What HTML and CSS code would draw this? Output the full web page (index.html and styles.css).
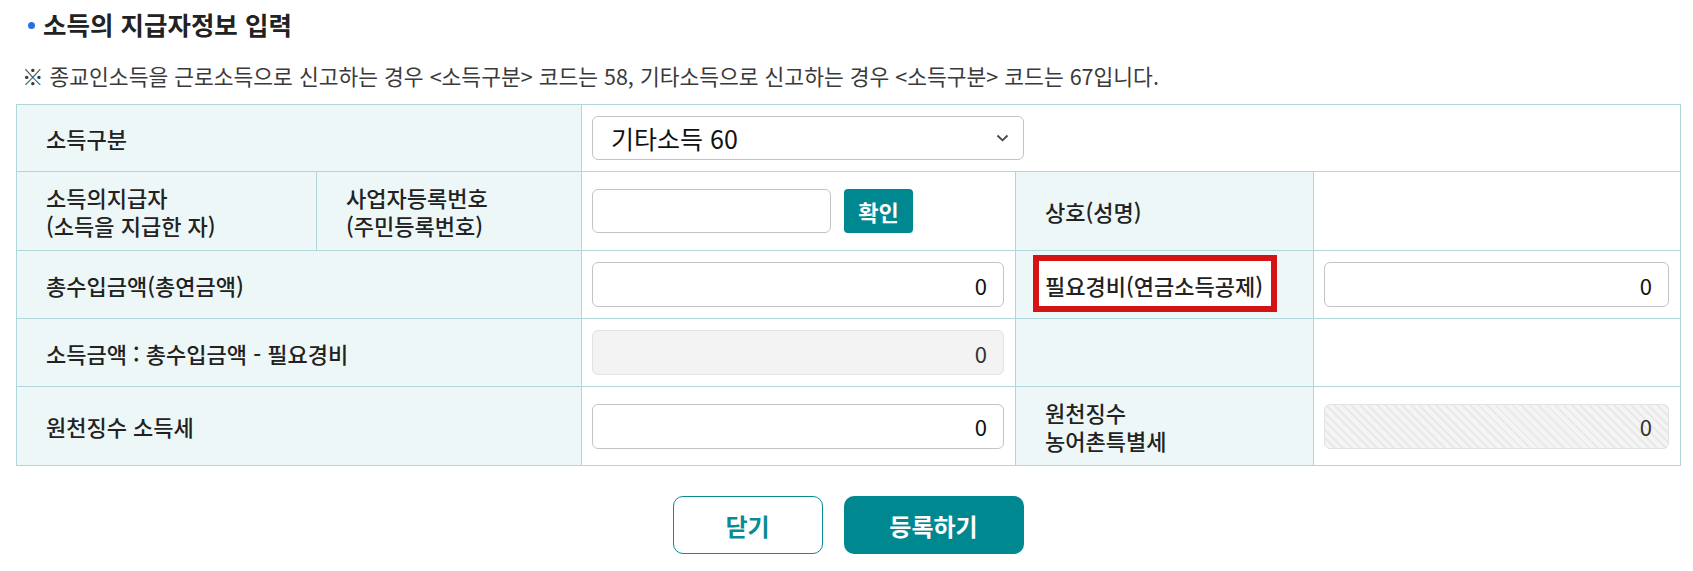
FILE: index.html
```html
<!DOCTYPE html>
<html lang="ko">
<head>
<meta charset="utf-8">
<title>소득의 지급자정보 입력</title>
<link rel="stylesheet" href="styles.css">
</head>
<body>
<div class="page">
  <h2 class="title"><span class="dot"></span>소득의 지급자정보 입력</h2>
  <p class="note">※ 종교인소득을 근로소득으로 신고하는 경우 &lt;소득구분&gt; 코드는 58, 기타소득으로 신고하는 경우 &lt;소득구분&gt; 코드는 67입니다.</p>
  <table class="form">
    <colgroup>
      <col class="c1"><col class="c2"><col class="c3"><col class="c4"><col class="c5">
    </colgroup>
    <tr>
      <th colspan="2">소득구분</th>
      <td colspan="3">
        <div class="select"><span>기타소득 60</span>
          <svg class="chev" width="13" height="8" viewBox="0 0 13 8"><path d="M1.5 1.5 L6.5 6.3 L11.5 1.5" fill="none" stroke="#444" stroke-width="1.8"/></svg>
        </div>
      </td>
    </tr>
    <tr class="tall">
      <th>소득의지급자<br>(소득을 지급한 자)</th>
      <th>사업자등록번호<br>(주민등록번호)</th>
      <td>
        <div class="inline">
          <div class="input short"></div>
          <button class="btn-check">확인</button>
        </div>
      </td>
      <th>상호(성명)</th>
      <td></td>
    </tr>
    <tr>
      <th colspan="2">총수입금액(총연금액)</th>
      <td><div class="input num">0</div></td>
      <th class="hl-cell"><span class="hl">필요경비(연금소득공제)</span></th>
      <td><div class="input num">0</div></td>
    </tr>
    <tr>
      <th colspan="2">소득금액 : 총수입금액 - 필요경비</th>
      <td><div class="input num disabled">0</div></td>
      <th></th>
      <td></td>
    </tr>
    <tr class="tall">
      <th colspan="2">원천징수 소득세</th>
      <td><div class="input num">0</div></td>
      <th>원천징수<br>농어촌특별세</th>
      <td><div class="input num hatched">0</div></td>
    </tr>
  </table>
  <div class="actions">
    <button class="btn btn-line">닫기</button>
    <button class="btn btn-fill">등록하기</button>
  </div>
</div>
</body>
</html>
```

FILE: styles.css
```css
* { box-sizing: border-box; }
html, body { margin: 0; padding: 0; background: #fff; }
body {
  font-family: "Noto Sans CJK KR", "Noto Sans", sans-serif;
  color: #222;
}
.page {
  padding: 8px 13px 0 16px;
  width: 1693px;
}
.title {
  display: flex;
  align-items: center;
  margin: 0;
  font-size: 25.5px;
  line-height: 32px;
  font-weight: 700;
  color: #222;
  padding-left: 12px;
}
.dot {
  width: 7px;
  height: 7px;
  border-radius: 50%;
  background: #2a6ee6;
  margin-right: 8px;
  margin-top: 2px;
}
.note {
  margin: 22px 0 14px 6px;
  font-size: 21.5px;
  line-height: 28px;
  color: #3a3a3a;
}
.form {
  border-collapse: collapse;
  table-layout: fixed;
  width: 1664px;
  font-size: 22px;
  line-height: 28px;
}
.c1 { width: 300px; }
.c2 { width: 265px; }
.c3 { width: 434px; }
.c4 { width: 298px; }
.c5 { width: 367px; }
.form th, .form td {
  border: 1px solid #b2d7da;
  vertical-align: middle;
}
.form th {
  background: #edf7f7;
  font-weight: 500;
  text-align: left;
  padding: 11px 20px 11px 29px;
  color: #222;
}
.form td {
  background: #fff;
  padding: 11px 11px 11px 10px;
}
.form tr { height: 67px; }
.form tr.tall { height: 79px; }
.select {
  width: 432px;
  height: 44px;
  border: 1px solid #c4c4c4;
  border-radius: 6px;
  display: flex;
  align-items: center;
  justify-content: space-between;
  padding: 0 14px 0 18px;
  color: #111;
  font-size: 25px;
}
.input {
  height: 45px;
  border: 1px solid #c4c4c4;
  border-radius: 6px;
  background: #fff;
  color: #111;
  display: flex;
  align-items: center;
}
.input.num {
  justify-content: flex-end;
  padding-right: 16px;
}
.input.disabled {
  background: #f3f3f3;
  border-color: #e2e2e4;
  color: #333;
}
.input.hatched {
  border-color: #e2e2e4;
  background: repeating-linear-gradient(45deg, #e9e9ea 0 2px, #f4f4f5 2px 6px);
  color: #333;
}
.inline {
  display: flex;
  align-items: center;
  gap: 13px;
}
.input.short { width: 239px; height: 44px; }
.btn-check {
  width: 69px;
  height: 44px;
  border: 0;
  border-radius: 4px;
  background: #008891;
  color: #fff;
  font-family: inherit;
  font-size: 22px;
  font-weight: 700;
  padding: 0;
}
.hl-cell { padding-left: 29px; }
.hl {
  position: relative;
  z-index: 0;
}
.hl::before {
  content: "";
  position: absolute;
  left: -12px;
  right: -14px;
  top: -14px;
  bottom: -11px;
  border: 6px solid #d21414;
  background: #fff;
  z-index: -1;
}
.actions {
  display: flex;
  justify-content: center;
  gap: 21px;
  margin-top: 30px;
}
.btn {
  height: 58px;
  border-radius: 10px;
  font-family: inherit;
  font-size: 24px;
  font-weight: 700;
  padding: 0;
}
.btn-line {
  width: 150px;
  background: #fff;
  border: 1px solid #0a8a93;
  color: #0a8a93;
}
.btn-fill {
  width: 180px;
  background: #008891;
  border: 0;
  color: #fff;
}
```
